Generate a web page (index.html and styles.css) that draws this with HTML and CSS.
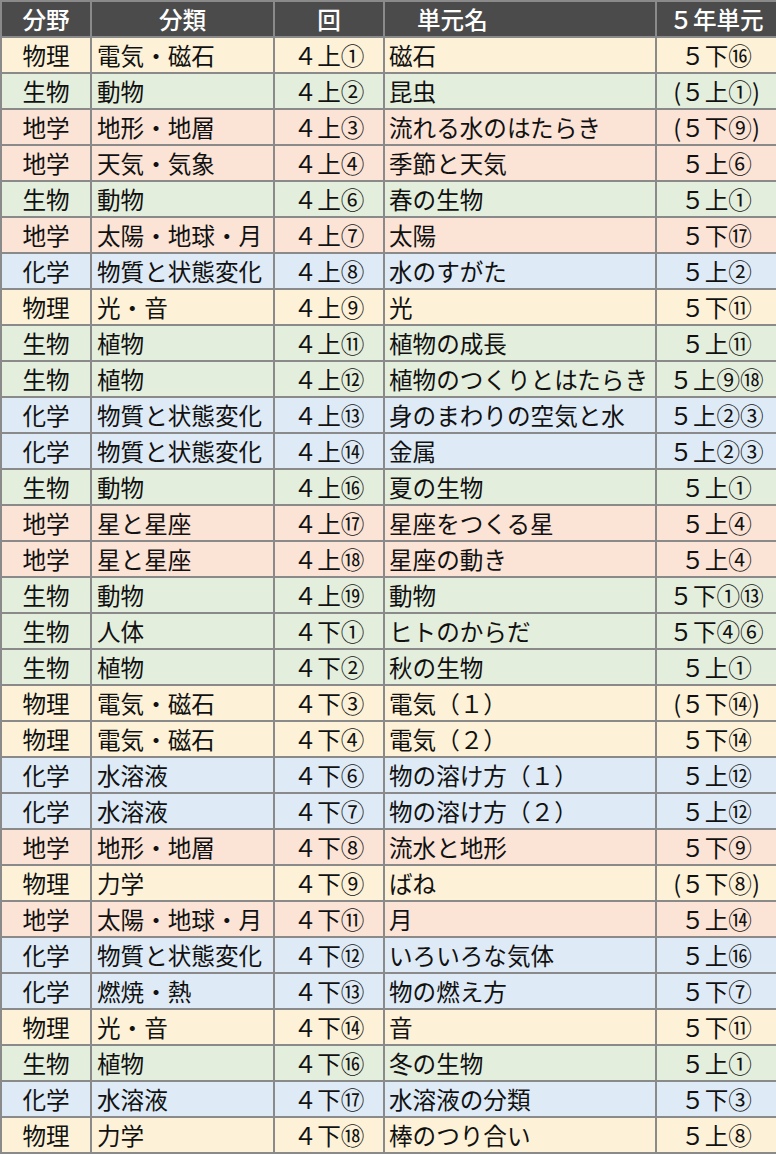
FILE: index.html
```html
<!DOCTYPE html>
<html lang="ja">
<head>
<meta charset="utf-8">
<title>単元対応表</title>
<link rel="stylesheet" href="styles.css">
</head>
<body>
<table class="units">
<colgroup>
<col class="c-field"><col class="c-cat"><col class="c-no"><col class="c-name"><col class="c-g5">
</colgroup>
<thead>
<tr><th>分野</th><th>分類</th><th>回</th><th class="h-name">単元名</th><th>５年単元</th></tr>
</thead>
<tbody>
<tr class="phys"><td>物理</td><td>電気・磁石</td><td>４上①</td><td>磁石</td><td>５下⑯</td></tr>
<tr class="bio"><td>生物</td><td>動物</td><td>４上②</td><td>昆虫</td><td>(５上①)</td></tr>
<tr class="earth"><td>地学</td><td>地形・地層</td><td>４上③</td><td>流れる水のはたらき</td><td>(５下⑨)</td></tr>
<tr class="earth"><td>地学</td><td>天気・気象</td><td>４上④</td><td>季節と天気</td><td>５上⑥</td></tr>
<tr class="bio"><td>生物</td><td>動物</td><td>４上⑥</td><td>春の生物</td><td>５上①</td></tr>
<tr class="earth"><td>地学</td><td>太陽・地球・月</td><td>４上⑦</td><td>太陽</td><td>５下⑰</td></tr>
<tr class="chem"><td>化学</td><td>物質と状態変化</td><td>４上⑧</td><td>水のすがた</td><td>５上②</td></tr>
<tr class="phys"><td>物理</td><td>光・音</td><td>４上⑨</td><td>光</td><td>５下⑪</td></tr>
<tr class="bio"><td>生物</td><td>植物</td><td>４上⑪</td><td>植物の成長</td><td>５上⑪</td></tr>
<tr class="bio"><td>生物</td><td>植物</td><td>４上⑫</td><td>植物のつくりとはたらき</td><td>５上⑨⑱</td></tr>
<tr class="chem"><td>化学</td><td>物質と状態変化</td><td>４上⑬</td><td>身のまわりの空気と水</td><td>５上②③</td></tr>
<tr class="chem"><td>化学</td><td>物質と状態変化</td><td>４上⑭</td><td>金属</td><td>５上②③</td></tr>
<tr class="bio"><td>生物</td><td>動物</td><td>４上⑯</td><td>夏の生物</td><td>５上①</td></tr>
<tr class="earth"><td>地学</td><td>星と星座</td><td>４上⑰</td><td>星座をつくる星</td><td>５上④</td></tr>
<tr class="earth"><td>地学</td><td>星と星座</td><td>４上⑱</td><td>星座の動き</td><td>５上④</td></tr>
<tr class="bio"><td>生物</td><td>動物</td><td>４上⑲</td><td>動物</td><td>５下①⑬</td></tr>
<tr class="bio"><td>生物</td><td>人体</td><td>４下①</td><td>ヒトのからだ</td><td>５下④⑥</td></tr>
<tr class="bio"><td>生物</td><td>植物</td><td>４下②</td><td>秋の生物</td><td>５上①</td></tr>
<tr class="phys"><td>物理</td><td>電気・磁石</td><td>４下③</td><td>電気（１）</td><td>(５下⑭)</td></tr>
<tr class="phys"><td>物理</td><td>電気・磁石</td><td>４下④</td><td>電気（２）</td><td>５下⑭</td></tr>
<tr class="chem"><td>化学</td><td>水溶液</td><td>４下⑥</td><td>物の溶け方（１）</td><td>５上⑫</td></tr>
<tr class="chem"><td>化学</td><td>水溶液</td><td>４下⑦</td><td>物の溶け方（２）</td><td>５上⑫</td></tr>
<tr class="earth"><td>地学</td><td>地形・地層</td><td>４下⑧</td><td>流水と地形</td><td>５下⑨</td></tr>
<tr class="phys"><td>物理</td><td>力学</td><td>４下⑨</td><td>ばね</td><td>(５下⑧)</td></tr>
<tr class="earth"><td>地学</td><td>太陽・地球・月</td><td>４下⑪</td><td>月</td><td>５上⑭</td></tr>
<tr class="chem"><td>化学</td><td>物質と状態変化</td><td>４下⑫</td><td>いろいろな気体</td><td>５上⑯</td></tr>
<tr class="chem"><td>化学</td><td>燃焼・熱</td><td>４下⑬</td><td>物の燃え方</td><td>５下⑦</td></tr>
<tr class="phys"><td>物理</td><td>光・音</td><td>４下⑭</td><td>音</td><td>５下⑪</td></tr>
<tr class="bio"><td>生物</td><td>植物</td><td>４下⑯</td><td>冬の生物</td><td>５上①</td></tr>
<tr class="chem"><td>化学</td><td>水溶液</td><td>４下⑰</td><td>水溶液の分類</td><td>５下③</td></tr>
<tr class="phys"><td>物理</td><td>力学</td><td>４下⑱</td><td>棒のつり合い</td><td>５上⑧</td></tr>
</tbody>
</table>
</body>
</html>
```

FILE: styles.css
```css
html, body {
  margin: 0;
  padding: 0;
  background: #ffffff;
}

.units {
  border-collapse: collapse;
  table-layout: fixed;
  width: 776px;
  font-family: "Noto Sans CJK JP", "Noto Sans", sans-serif;
  font-size: 23.6px;
  color: #111111;
  border: 2px solid #8a8a8a;
}

.c-field { width: 90px; }
.c-cat { width: 183px; }
.c-no { width: 110px; }
.c-name { width: 272px; }
.c-g5 { width: 121px; }

.units th,
.units td {
  border: 2px solid #8a8a8a;
  height: 34px;
  padding: 0;
  line-height: 34px;
  white-space: nowrap;
  overflow: hidden;
  box-sizing: border-box;
}

.units tr {
  height: 36px;
}

.units th {
  background: #4b4b4b;
  color: #ffffff;
  font-weight: 500;
  text-align: center;
}

.units th.h-name {
  text-align: left;
  padding-left: 32px;
}

.units td:nth-child(1) { text-align: center; }
.units td:nth-child(2) { text-align: left; padding-left: 5px; }
.units td:nth-child(3) { text-align: center; }
.units td:nth-child(4) { text-align: left; padding-left: 4px; }
.units td:nth-child(5) { text-align: center; }

.phys td { background: #fdf2d7; }
.bio td { background: #e4eedc; }
.earth td { background: #fbe3d6; }
.chem td { background: #deeaf5; }
```
